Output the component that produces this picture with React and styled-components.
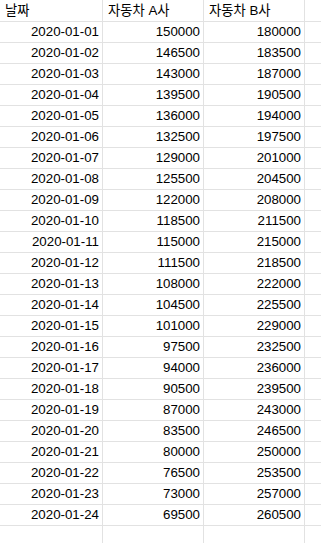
import React from "react";
import styled, { createGlobalStyle } from "styled-components";

const Global = createGlobalStyle`
  html, body { margin: 0; padding: 0; background: #fff; overflow: hidden; }
  body { font-family: "Liberation Sans", Arial, "Noto Sans CJK KR", sans-serif; }
`;

const Sheet = styled.div`
  display: grid;
  grid-template-columns: 103px 101px 101px 40px;
  grid-template-rows: 22px repeat(25, 21px);
  width: 321px;
  height: 543px;
  overflow: hidden;
  font-size: 13.3px;
  color: #000;
`;

const Cell = styled.div`
  box-sizing: border-box;
  border-right: 1px solid #e2e2e2;
  border-bottom: 1px solid #e2e2e2;
  display: flex;
  align-items: center;
  justify-content: ${(p) => (p.$num ? "flex-end" : "flex-start")};
  padding: ${(p) => (p.$num ? "0 3px 0 0" : "0 0 0 5px")};
  white-space: nowrap;
  line-height: 1;
  font-family: ${(p) =>
    p.$head
      ? '"Liberation Sans", "Noto Sans CJK KR", sans-serif'
      : '"Liberation Sans", Arial, sans-serif'};
`;

const Row = styled.div`
  display: contents;
`;

const a = [];
const b = [];
for (let i = 0; i < 24; i++) {
  a.push(150000 - 3500 * i);
  b.push(180000 + 3500 * i);
}

const rows = a.map((v, i) => ({
  date: `2020-01-${String(i + 1).padStart(2, "0")}`,
  a: v,
  b: b[i],
}));

export default function App() {
  return (
    <>
      <Global />
      <Sheet>
        <Row>
          <Cell $head>날짜</Cell>
          <Cell $head>자동차 A사</Cell>
          <Cell $head>자동차 B사</Cell>
          <Cell $head />
        </Row>
        {rows.map((r) => (
          <Row key={r.date}>
            <Cell $num>{r.date}</Cell>
            <Cell $num>{r.a}</Cell>
            <Cell $num>{r.b}</Cell>
            <Cell />
          </Row>
        ))}
        <Row>
          <Cell />
          <Cell />
          <Cell />
          <Cell />
        </Row>
      </Sheet>
    </>
  );
}
